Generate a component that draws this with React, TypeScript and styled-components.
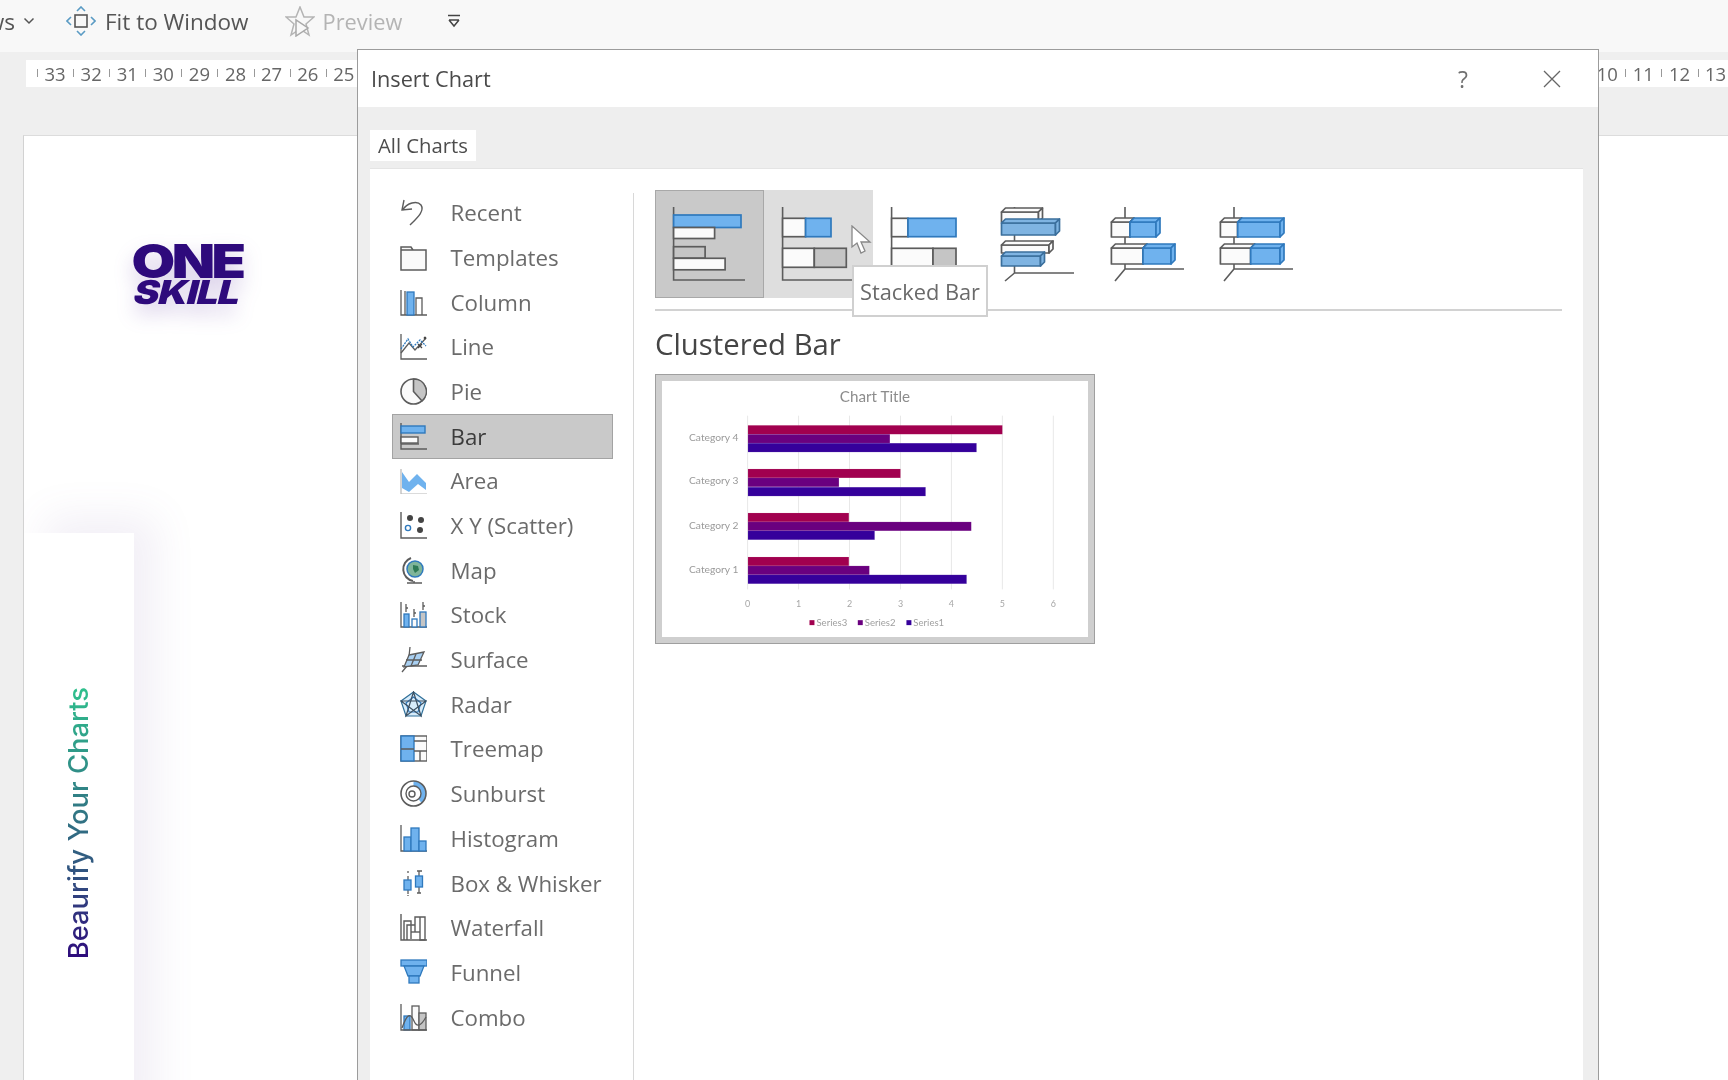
import React from "react";
import styled, { createGlobalStyle } from "styled-components";

const Global = createGlobalStyle`
  html, body { margin: 0; padding: 0; background: #efefef; overflow: hidden; }
  * { box-sizing: border-box; }
`;

const UI = `"Open Sans", "Noto Sans", "Liberation Sans", sans-serif`;

const Page = styled.div`
  position: relative;
  width: 1728px;
  height: 1080px;
  overflow: hidden;
  display: flex;
  flex-direction: column;
  background: #efefef;
  font-family: ${UI};
  filter: blur(0.35px);
`;

const Toolbar = styled.div`
  height: 52px;
  flex: none;
  display: flex;
  align-items: center;
  background: #f8f8f8;
  font-size: 22.6px;
  color: #555;
  padding-bottom: 10px;
`;
const ClippedLabel = styled.span`
  width: 15px;
  overflow: hidden;
  display: flex;
  justify-content: flex-end;
  white-space: nowrap;
`;
const ToolButton = styled.div<{ $gap: number; $left: number; $muted?: boolean }>`
  display: flex;
  align-items: center;
  gap: ${(p) => p.$gap}px;
  margin-left: ${(p) => p.$left}px;
  font-size: ${(p) => (p.$muted ? 21.8 : 22.5)}px;
  color: ${(p) => (p.$muted ? "#b4b4b4" : "#555")};
  white-space: nowrap;
`;

const Ruler = styled.div`
  flex: none;
  height: 27px;
  margin: 8px 0 0 26px;
  padding-left: 11px;
  background: #fff;
  display: flex;
  align-items: center;
  font-size: 18.5px;
  color: #666;
`;
const RulerCell = styled.span`
  position: relative;
  flex: none;
  width: 36.1px;
  text-align: center;
  line-height: 27px;
  &::before {
    content: "";
    position: absolute;
    left: 0;
    top: 9px;
    width: 1px;
    height: 8px;
    background: #999;
  }
`;
const RulerGap = styled.span`
  flex: none;
  width: 1227.4px;
`;

const Slide = styled.div`
  position: relative;
  flex: 1;
  margin: 48px 0 0 23px;
  background: #fff;
  border-top: 1px solid #dcdcdc;
  border-left: 1px solid #d2d2d2;
  overflow: hidden;
`;
const Logo = styled.div`
  position: absolute;
  left: 105px;
  top: 107px;
  width: 116px;
  color: #2e0a7c;
  font-family: Inter, "Liberation Sans", sans-serif;
  font-weight: 900;
  filter: drop-shadow(0 10px 10px rgba(90, 50, 160, 0.24));
`;
const LogoTop = styled.div`
  font-size: 47px;
  line-height: 36px;
  height: 36px;
  letter-spacing: -3px;
  text-align: center;
  transform: scaleX(1.2);
`;
const LogoBottom = styled.div`
  font-size: 33px;
  line-height: 26px;
  height: 26px;
  letter-spacing: -1px;
  text-align: center;
  transform: skewX(-14deg) scaleX(1.18);
`;
const SidePanel = styled.div`
  position: absolute;
  left: 0;
  top: 397px;
  bottom: -60px;
  width: 110px;
  background: #fff;
  padding: 154px 3px 0 0;
  display: flex;
  justify-content: center;
  align-items: flex-start;
  box-shadow: 22px -16px 40px rgba(125, 95, 165, 0.1);
`;
const SideText = styled.div`
  writing-mode: vertical-rl;
  transform: rotate(180deg);
  font-family: Inter, "Liberation Sans", sans-serif;
  font-weight: 500;
  font-size: 27.4px;
  line-height: 32px;
  white-space: nowrap;
  background: linear-gradient(180deg, #2e0a7c 0%, #31507f 30%, #2fc08d 100%);
  -webkit-background-clip: text;
  background-clip: text;
  color: transparent;
`;

const Dialog = styled.div`
  position: absolute;
  left: 357px;
  top: 49px;
  width: 1242px;
  height: 1040px;
  background: #eeeeee;
  border: 1px solid #9c9c9c;
  display: flex;
  flex-direction: column;
`;
const TitleBar = styled.div`
  flex: none;
  height: 57px;
  background: #fff;
  display: flex;
  align-items: center;
  padding: 0 37px 0 13px;
  color: #4a4a4a;
  font-size: 21.7px;
`;
const Title = styled.div`
  flex: 1;
`;
const Help = styled.span`
  margin-right: 75px;
  font-size: 23px;
  color: #707070;
`;
const TabStrip = styled.div`
  flex: none;
  margin: 23px 0 0 12px;
  display: flex;
`;
const Tab = styled.div`
  width: 106px;
  height: 31px;
  background: #fff;
  text-align: center;
  font-size: 20.3px;
  line-height: 31px;
  color: #4c4c4c;
`;
const Panel = styled.div`
  flex: 1;
  margin: 7px 15px 0 12px;
  background: #fff;
  border-top: 1px solid #e4e4e4;
  display: flex;
`;
const ListColumn = styled.div`
  flex: none;
  width: 264px;
  padding: 21.4px 21px 0 22px;
  position: relative;
  &::after {
    content: "";
    position: absolute;
    right: 0;
    top: 24px;
    bottom: 0;
    width: 1px;
    background: #d8d8d8;
  }
`;
const ListRow = styled.div<{ $selected?: boolean }>`
  height: 44.7px;
  display: flex;
  align-items: center;
  gap: 23.5px;
  padding-left: 8px;
  font-size: 22.3px;
  color: ${(p) => (p.$selected ? "#3c3c3c" : "#6b6b6b")};
  background: ${(p) => (p.$selected ? "#c9c9c9" : "transparent")};
  outline: ${(p) => (p.$selected ? "1px solid #a3a3a3" : "none")};
  outline-offset: -1px;
  white-space: nowrap;
`;
const RowIcon = styled.svg`
  flex: none;
  width: 27px;
  height: 27px;
`;
const Content = styled.div`
  flex: 1;
  padding: 21px 0 0 21px;
  min-width: 0;
`;
const ThumbRow = styled.div`
  position: relative;
  display: flex;
  height: 121px;
  margin-right: 21px;
  border-bottom: 2px solid #d2d2d2;
`;
const Thumb = styled.div<{ $state?: "selected" | "hover" }>`
  width: 109px;
  height: 108px;
  flex: none;
  background: ${(p) =>
    p.$state === "selected" ? "#c9c9c9" : p.$state === "hover" ? "#dedede" : "transparent"};
  outline: ${(p) => (p.$state === "selected" ? "1px solid #a8a8a8" : "none")};
  outline-offset: -1px;
`;
const ThumbSvg = styled.svg`
  display: block;
  width: 109px;
  height: 108px;
`;
const Tooltip = styled.div`
  position: absolute;
  left: 197px;
  top: 75px;
  width: 136px;
  height: 52px;
  background: #fff;
  border: 2px solid #d0d0d0;
  font-size: 21.8px;
  line-height: 50px;
  text-align: center;
  color: #6a6a6a;
  white-space: nowrap;
`;
const CursorSvg = styled.svg`
  position: absolute;
  left: 196px;
  top: 35px;
  width: 21px;
  height: 29px;
`;
const Heading = styled.div`
  margin-top: 11px;
  height: 40px;
  font-size: 29.3px;
  line-height: 44px;
  color: #454545;
  white-space: nowrap;
`;
const PreviewFrame = styled.div`
  margin-top: 12px;
  width: 440px;
  height: 270px;
  background: #fff;
  border: 1px solid #9f9f9f;
  box-shadow: inset 0 0 0 6px #cfcfcf;
`;
const PreviewSvg = styled.svg`
  display: block;
  width: 100%;
  height: 100%;
`;

const G = "#5c5c5c";
const B = "#6fb2ee";
const BS = "#2f79bd";
const W = "#fbfbfb";
const H = "#c5c5c5";

const icons: Record<string, React.ReactNode> = {
  Recent: (
    <g fill="none" stroke={G} strokeWidth="1.4">
      <path d="M4 1 L2 11 L12 10" />
      <path d="M2.5 11 C7 4 17 1 21 6 C25 12 17 19 10 26" />
    </g>
  ),
  Templates: (
    <path d="M1 5V3h10l2 3h13v20H1zM1 6h12" fill="#fafafa" stroke={G} strokeWidth="1.5" />
  ),
  Column: (
    <g stroke={G} strokeWidth="1.3" fill="none">
      <path d="M1 1v25h26" />
      <path d="M5 26V2" />
      <rect x="7" y="3" width="7" height="23" fill={B} stroke={BS} />
      <path d="M16 26V9h6v17" />
    </g>
  ),
  Line: (
    <g fill="none" strokeWidth="1.3">
      <path d="M1 1v25h26" stroke={G} />
      <path d="M1 20 L9 10 L15 17 L26 5" stroke={G} />
      <path d="M1 16 L8 6 L13 14 L20 7 L26 13" stroke={BS} strokeDasharray="2 1" />
      <path d="M18 11l4 4M22 11l-4 4M24 4l2 2M26 4l-2 2" stroke="#444" />
    </g>
  ),
  Pie: (
    <g stroke={G} strokeWidth="1.6">
      <circle cx="13.5" cy="13.5" r="12.5" fill="#fafafa" />
      <path d="M13.5 13.5V1A12.5 12.5 0 0 1 22 23z" fill={H} />
    </g>
  ),
  Bar: (
    <g stroke={G} strokeWidth="1.4" fill="none">
      <path d="M1 0v26h26" />
      <path d="M1 21h18" />
      <rect x="1" y="3" width="24" height="7" fill={B} stroke={BS} />
      <rect x="1" y="14" width="17" height="6" fill="#fafafa" />
    </g>
  ),
  Area: (
    <g>
      <path d="M1 2v25h26" fill="none" stroke="#b7b7b7" strokeWidth="1.2" />
      <path d="M2 5 L9 15 L17 7 L26 16 V23 L18 17 L9 25 L2 21z" fill={B} />
    </g>
  ),
  "X Y (Scatter)": (
    <g>
      <path d="M1 0v26h26" fill="none" stroke={G} strokeWidth="1.4" />
      <circle cx="10" cy="6" r="3" fill="#444" />
      <circle cx="21" cy="8" r="3" fill="#444" />
      <circle cx="20" cy="18" r="3" fill="#444" />
      <circle cx="8" cy="16" r="2.6" fill="#fff" stroke={BS} strokeWidth="1.4" />
    </g>
  ),
  Map: (
    <g fill="none" stroke={G} strokeWidth="1.5">
      <circle cx="15" cy="12" r="8" fill="#7fb59a" stroke={BS} />
      <path d="M11 1 A12 12 0 0 0 13 24" strokeWidth="2" />
      <path d="M7 26h15M14 24v2" />
      <path d="M13 8l5 1 1 4-4 3-2-4z" fill="#2f7a55" stroke="none" />
    </g>
  ),
  Stock: (
    <g strokeWidth="1.3" stroke={G} fill="none">
      <path d="M1 1v25h26" />
      <rect x="4" y="13" width="5" height="13" fill={B} stroke={BS} />
      <rect x="12" y="18" width="5" height="8" fill="#fafafa" stroke={BS} />
      <rect x="20" y="11" width="6" height="15" fill={H} stroke={BS} />
      <path d="M6 3v8M14 8v8M23 1v8" />
      <path d="M6 7h2M14 12h2M23 5h2" />
    </g>
  ),
  Surface: (
    <g stroke={G} strokeWidth="1.3" fill="none">
      <path d="M10 1 L8 20 M2 26 L12 14 M2 20 H27" />
      <path d="M9 9 L24 6 L18 19 L4 21z" fill="#a9d0f2" stroke={G} />
      <path d="M16 8 L11 20 M6 14 H22" />
    </g>
  ),
  Radar: (
    <g fill="none" stroke={BS} strokeWidth="1.2">
      <path d="M13.5 1 L26 10 L21 25 H6 L1 10z" stroke="#2f6f99" fill="#d8ecfa" />
      <path d="M13.5 6 L21 12 L18 21 H9 L6 12z" />
      <path d="M13.5 1 L21 25 L1 10 H26 L6 25z" stroke="#3c4f60" />
    </g>
  ),
  Treemap: (
    <g stroke={G} strokeWidth="1.4">
      <rect x="1" y="1" width="26" height="25" fill="#fafafa" />
      <rect x="1" y="1" width="13" height="25" fill={B} stroke={BS} />
      <path d="M1 14h13M14 6h13M14 16h13M20 16v10" fill="none" />
    </g>
  ),
  Sunburst: (
    <g fill="none">
      <path d="M13.5 3.5A10 10 0 0 1 23.5 13.5A10 10 0 0 1 20 21" stroke={B} strokeWidth="5" />
      <circle cx="13.5" cy="13.5" r="12.5" stroke={G} strokeWidth="1.6" />
      <circle cx="13.5" cy="13.5" r="7.5" stroke={G} strokeWidth="1.4" />
      <circle cx="12" cy="14" r="3" stroke={G} strokeWidth="1.4" fill="#fff" />
    </g>
  ),
  Histogram: (
    <g stroke={G} strokeWidth="1.3" fill={B}>
      <path d="M1 0v26h26" fill="none" />
      <rect x="4" y="12" width="7" height="14" stroke={BS} />
      <rect x="11" y="3" width="8" height="23" stroke={BS} />
      <rect x="19" y="16" width="7" height="10" stroke={BS} />
    </g>
  ),
  "Box & Whisker": (
    <g stroke={G} strokeWidth="1.3" fill={B}>
      <path d="M8 1v2M8 6v4M8 20v4M8 25v1M19 1v6M19 17v6M17 1h5M17 23h4" fill="none" />
      <rect x="4" y="10" width="7" height="10" stroke={BS} />
      <rect x="15.5" y="6" width="7" height="11" stroke={BS} />
    </g>
  ),
  Waterfall: (
    <g stroke={G} strokeWidth="1.4" fill="none">
      <path d="M1 0v26h26" />
      <path d="M4 26V7h7v18" />
      <path d="M7 26V11h8" />
      <path d="M15 18V3h10v23h-5V3" />
      <path d="M11 18h9" />
    </g>
  ),
  Funnel: (
    <g fill={B} stroke={BS} strokeWidth="1.3">
      <rect x="1" y="1" width="26" height="6" />
      <path d="M4 7h20l-4 10H8z" />
      <rect x="9" y="17" width="10" height="7" />
    </g>
  ),
  Combo: (
    <g strokeWidth="1.3" stroke={G} fill="none">
      <rect x="4" y="12" width="6" height="14" fill={B} stroke={BS} />
      <rect x="12" y="2" width="7" height="24" fill="#fafafa" />
      <rect x="19" y="9" width="7" height="17" fill={H} />
      <path d="M1 0v26h26" />
      <path d="M2 24 C7 10 10 8 14 17 C17 24 21 22 26 13" />
    </g>
  ),
};

const names = Object.keys(icons);

const Flat = ({ x, y, w, h, fill, stroke }: { x: number; y: number; w: number; h: number; fill: string; stroke?: string }) => (
  <rect x={x} y={y} width={w} height={h} fill={fill} stroke={stroke ?? G} strokeWidth="1.7" />
);

const Box3D = ({ x, y, w, h, fill, stroke }: { x: number; y: number; w: number; h: number; fill: string; stroke?: string }) => {
  const d = 4;
  const s = stroke ?? G;
  return (
    <g stroke={s} strokeWidth="1.7" strokeLinejoin="round">
      <rect x={x} y={y} width={w} height={h} fill={fill} />
      <path d={`M${x} ${y}l${d} -${d}h${w}l-${d} ${d}z`} fill={fill} />
      <path d={`M${x + w} ${y}l${d} -${d}v${h}l-${d} ${d}z`} fill={fill} />
    </g>
  );
};

const thumbs: React.ReactNode[] = [
  <g key="a">
    <path d="M18.6 17V90H90" fill="none" stroke={G} strokeWidth="1.6" />
    <Flat x={18.6} y={25} w={67.4} h={12.5} fill={B} stroke={BS} />
    <Flat x={18.6} y={37.5} w={41} h={11} fill={W} />
    <Flat x={18.6} y={56.7} w={31.5} h={11.5} fill={H} />
    <Flat x={18.6} y={68.3} w={51.5} h={11.5} fill={W} />
  </g>,
  <g key="b">
    <path d="M18.6 17V90H90" fill="none" stroke={G} strokeWidth="1.6" />
    <Flat x={18.6} y={28.3} w={23} h={18.4} fill={W} />
    <Flat x={41.6} y={28.3} w={25.4} h={18.4} fill={B} stroke={BS} />
    <Flat x={18.6} y={58.3} w={31.7} h={19} fill={W} />
    <Flat x={50.3} y={58.3} w={32} h={19} fill={H} />
  </g>,
  <g key="c">
    <path d="M18.6 17V90H90" fill="none" stroke={G} strokeWidth="1.6" />
    <Flat x={18.6} y={28.3} w={16.4} h={18.4} fill={W} />
    <Flat x={35} y={28.3} w={48} h={18.4} fill={B} stroke={BS} />
    <Flat x={18.6} y={58.3} w={41.4} h={19} fill={W} />
    <Flat x={60} y={58.3} w={23} h={19} fill={H} />
  </g>,
  <g key="d">
    <path d="M32.5 17V83H92M32.5 83L23 91" fill="none" stroke={G} strokeWidth="1.6" />
    <Box3D x={19.5} y={22} w={37} h={10} fill={W} />
    <Box3D x={19.5} y={33} w={54} h={12} fill="#7fb4e2" stroke="#3b6f9c" />
    <Box3D x={19.5} y={55} w={47.5} h={8} fill={W} />
    <Box3D x={19.5} y={66} w={39} h={10} fill="#7fb4e2" stroke="#3b6f9c" />
  </g>,
  <g key="e">
    <path d="M34 17V79H93M34 79L24 91" fill="none" stroke={G} strokeWidth="1.6" />
    <Box3D x={20.4} y={32} w={18.6} h={15} fill={W} />
    <Box3D x={39} y={32} w={26} h={15} fill={B} stroke={BS} />
    <Box3D x={20.4} y={58} w={31.6} h={16} fill={W} />
    <Box3D x={52} y={58} w={28} h={16} fill={B} stroke={BS} />
  </g>,
  <g key="f">
    <path d="M34 17V79H93M34 79L24 91" fill="none" stroke={G} strokeWidth="1.6" />
    <Box3D x={20.4} y={32} w={17.3} h={15} fill={W} />
    <Box3D x={37.7} y={32} w={42.3} h={15} fill={B} stroke={BS} />
    <Box3D x={20.4} y={58} w={30.3} h={16} fill={W} />
    <Box3D x={50.7} y={58} w={29.3} h={16} fill={B} stroke={BS} />
  </g>,
];

const RED = "#a1004f";
const PUR = "#6a007f";
const IND = "#35009b";
const chartRows = [
  { label: "Category 4", ly: 242, bars: [[194, 1090, RED], [221, 750, PUR], [248, 1012, IND]] },
  { label: "Category 3", ly: 372, bars: [[326, 782, RED], [353, 596, PUR], [381, 858, IND]] },
  { label: "Category 2", ly: 507, bars: [[459, 626, RED], [486, 996, PUR], [513, 704, IND]] },
  { label: "Category 1", ly: 641, bars: [[592, 626, RED], [619, 688, PUR], [646, 982, IND]] },
] as const;
const gridX = [320, 474, 628, 782, 936, 1090, 1244];
const legend = [
  { x: 507, label: "Series3", color: RED },
  { x: 653, label: "Series2", color: PUR },
  { x: 800, label: "Series1", color: IND },
];

const Chart = () => (
  <PreviewSvg viewBox="45 42 1320 810" fontFamily="Lato, 'Open Sans', sans-serif">
    <rect x="66" y="64" width="1276" height="766" fill="#fff" />
    <text x="705" y="124" fontSize="46" textAnchor="middle" fill="#8c8c8c">Chart Title</text>
    {gridX.map((x, i) => (
      <g key={x}>
        <line x1={x} x2={x} y1="165" y2="690" stroke="#e8e8e8" strokeWidth="3" />
        <text x={x} y="744" fontSize="27" textAnchor="middle" fill="#a6a6a6">{i}</text>
      </g>
    ))}
    {chartRows.map((r) => (
      <g key={r.label}>
        <text x="292" y={r.ly} fontSize="31" textAnchor="end" fill="#9a9a9a">{r.label}</text>
        {r.bars.map(([y, end, c]) => (
          <rect key={y} x="321" y={y} width={end - 321} height="27" fill={c} stroke="#fff" strokeOpacity="0.18" strokeWidth="1.5" />
        ))}
      </g>
    ))}
    {legend.map((l) => (
      <g key={l.label}>
        <rect x={l.x} y="783" width="15" height="15" fill={l.color} />
        <text x={l.x + 21} y="800" fontSize="29" fill="#a0a0a0">{l.label}</text>
      </g>
    ))}
  </PreviewSvg>
);

const rulerLeft = [33, 32, 31, 30, 29, 28, 27, 26, 25];
const rulerRight = [10, 11, 12, 13];

export default function App() {
  return (
    <Page>
      <Global />
      <Toolbar>
        <ClippedLabel>ws</ClippedLabel>
        <svg width="12" height="10" viewBox="0 0 12 10" style={{ marginLeft: 8 }}>
          <path d="M1.5 2.5L6 7l4.5-4.5" fill="none" stroke="#555" strokeWidth="1.5" />
        </svg>
        <ToolButton $gap={9} $left={31}>
          <svg width="30" height="30" viewBox="0 0 30 30">
            <rect x="9" y="9" width="12" height="12" fill="none" stroke="#555" strokeWidth="1.6" />
            <path d="M11 5l4-4 4 4M11 25l4 4 4-4M5 11l-4 4 4 4M25 11l4 4-4 4" fill="none" stroke="#5a9bc4" strokeWidth="1.6" />
          </svg>
          Fit to Window
        </ToolButton>
        <ToolButton $gap={8} $left={36} $muted>
          <svg width="30" height="31" viewBox="0 0 30 31">
            <path d="M15 1L19 11H29L21 18L24 29L15 23L6 29L9 18L1 11H11Z" fill="none" stroke="#b4b4b4" strokeWidth="1.5" />
            <path d="M11 14v16l12-8z" fill="#f8f8f8" stroke="#a8a8a8" strokeWidth="1.5" />
          </svg>
          Preview
        </ToolButton>
        <svg width="14" height="14" viewBox="0 0 14 14" style={{ marginLeft: 45 }}>
          <path d="M1 1.5h12M2 6l5 6 5-6M2 6h10" fill="none" stroke="#444" strokeWidth="1.5" />
        </svg>
      </Toolbar>
      <Ruler>
        {rulerLeft.map((n) => (
          <RulerCell key={n}>{n}</RulerCell>
        ))}
        <RulerGap />
        {rulerRight.map((n) => (
          <RulerCell key={n}>{n}</RulerCell>
        ))}
      </Ruler>
      <Slide>
        <Logo>
          <LogoTop>ONE</LogoTop>
          <LogoBottom>SKILL</LogoBottom>
        </Logo>
        <SidePanel>
          <SideText>Beaurify Your Charts</SideText>
        </SidePanel>
      </Slide>
      <Dialog>
        <TitleBar>
          <Title>Insert Chart</Title>
          <Help>?</Help>
          <svg width="18" height="18" viewBox="0 0 18 18">
            <path d="M1 1l16 16M17 1L1 17" stroke="#666" strokeWidth="1.3" />
          </svg>
        </TitleBar>
        <TabStrip>
          <Tab>All Charts</Tab>
        </TabStrip>
        <Panel>
          <ListColumn>
            {names.map((n) => (
              <ListRow key={n} $selected={n === "Bar"}>
                <RowIcon viewBox="0 0 27 27">{icons[n]}</RowIcon>
                {n}
              </ListRow>
            ))}
          </ListColumn>
          <Content>
            <ThumbRow>
              {thumbs.map((t, i) => (
                <Thumb key={i} $state={i === 0 ? "selected" : i === 1 ? "hover" : undefined}>
                  <ThumbSvg viewBox="0 0 109 108">{t}</ThumbSvg>
                </Thumb>
              ))}
              <Tooltip>Stacked Bar</Tooltip>
              <CursorSvg viewBox="0 0 21 29">
                <path d="M1 1 L1 22 L6 18 L10 28 L14 26 L10 17 L19 17 Z" fill="#fff" stroke="#888" strokeWidth="1.3" />
              </CursorSvg>
            </ThumbRow>
            <Heading>Clustered Bar</Heading>
            <PreviewFrame>
              <Chart />
            </PreviewFrame>
          </Content>
        </Panel>
      </Dialog>
    </Page>
  );
}
